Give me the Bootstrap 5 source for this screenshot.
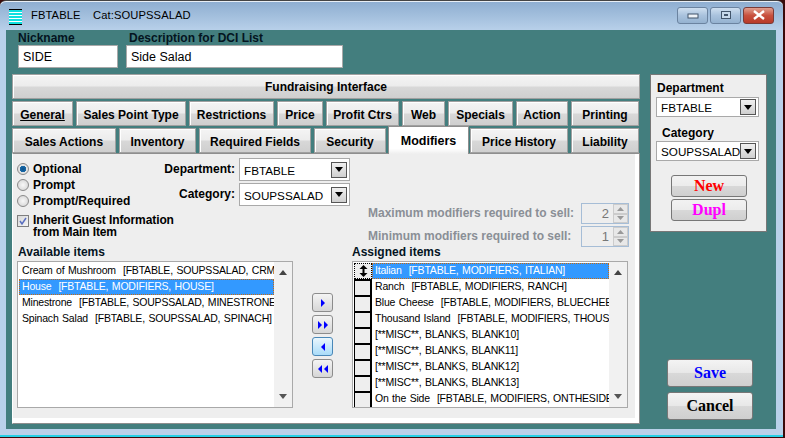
<!DOCTYPE html>
<html lang="en">
<head>
<meta charset="utf-8">
<title>FBTABLE</title>
<link href="https://cdn.jsdelivr.net/npm/bootstrap@5.3.0/dist/css/bootstrap.min.css" rel="stylesheet">
<style>
html,body{margin:0;width:785px;height:438px;overflow:hidden;background:#3a0a0a;}
body{font-family:"Liberation Sans",Arial,sans-serif;font-size:12px;color:#000;line-height:13px;}
.win{width:783px;height:437px;background:linear-gradient(180deg,#8dadd0 0,#b9d1ea 30px,#b9d1ea 100%);border-top:1px solid #444;border-bottom:2px solid #25d0e6;box-shadow:inset 0 1px 0 #e8eef5;border-radius:6px 6px 0 0;}
.ttl{height:29px;padding-left:9px;font-size:11.2px;letter-spacing:.1px;}
.ttl-ico{width:13px;height:16px;margin-top:2px;background:repeating-linear-gradient(180deg,#10e0e0 0,#10e0e0 2px,#fff 2px,#fff 3px);border-top:1px solid #000;border-bottom:1px solid #000;}
.ttl-a{margin-left:9px;width:62px;}
.wbtn{width:31px;height:17px;border:1px solid #6b83a0;border-radius:3px;background:linear-gradient(180deg,#cfdff0,#a9c2dd 50%,#95b2d0);margin-left:2px;}
.wbtn.cl{background:linear-gradient(180deg,#e0a090,#c8503e 50%,#b83a2a);border-color:#7a3b38;}
.wctl{margin-left:auto;margin-right:9px;margin-top:-1px;}
.client{width:770px;height:399px;margin-left:6px;background:#437e7e;}
.lcol{width:628px;margin-left:6px;}
.rcol{width:118px;margin-left:10px;}
.flds{padding-left:6px;}
.fld-l{font-weight:700;height:13px;margin-top:2px;color:#04141f;}
.fld-d{padding-left:3px;}
.tbx{height:23px;background:#fff;border:1px solid #a9a9a9;padding:1px 4px 0;line-height:21px;font-size:12.5px;}
.raised{background:linear-gradient(180deg,#f4f4f4 0,#ececec 48%,#d8d8d8 52%,#cfcfcf 100%);border:1px solid #a0a0a0;border-radius:0;padding:3px 0 0;color:#000;font-weight:700;font-size:12px;line-height:20px;text-align:center;height:25px;box-shadow:inset 1px 1px 0 #fff;}
.raised:hover{color:#000;}
.fund{width:628px;margin-top:6px;display:block;padding-top:2px;line-height:21px;}
.tabrow{margin-top:2px;height:25px;gap:3px;}
.tabon{height:28px;margin-top:-2px;margin-left:-1px;margin-right:-2px;padding:0;background:linear-gradient(180deg,#fff 0,#fff 80%,#eee 100%);border:1px solid #8e8e8e;border-bottom:0;box-shadow:none;font-size:12.5px;line-height:24px;position:relative;z-index:2;}
.tabu{text-decoration:underline;}
.pnl{width:628px;height:271px;background:#eee;border-top:1px solid #8e8e8e;border-left:1px solid #fff;border-right:1px solid #8e8e8e;border-bottom:1px solid #8e8e8e;box-shadow:inset -4px -5px 0 #fff;padding:4px 0 0 4px;font-weight:700;}
.upper{height:87px;}
.c1{width:147px;padding-top:3px;}
.radrow{height:16px;}
.rad{width:12px;height:12px;border-radius:50%;border:1px solid #8a8a8a;background:radial-gradient(circle,#f8f8f8,#d0d0d0);margin-right:4px;}
.rad.on{background:radial-gradient(circle,#0a4f8a 0,#1a6aa8 44%,#e4e4e4 50%,#ddd);}
.chk{width:12px;height:12px;border:1px solid #7f7f7f;background:linear-gradient(135deg,#d8d8d8,#f6f6f6);margin-right:4px;margin-top:1px;flex:none;}
.chk svg{display:block;}
.chkrow{margin-top:5px;line-height:12px;white-space:nowrap;letter-spacing:-.1px;}
.c2{width:186px;}
.sel-l{width:71px;text-align:right;margin-right:4px;}
.sel{background:#fff;border:1px solid #a9a9a9;font-weight:400;font-size:11.7px;padding:0 2px 0 4px;}
.sel-a{height:23px;width:111px;}
.sel-a .flex-grow-1{padding-top:1px;}
.sel-g{margin-top:2px;}
.sel-b{height:20px;width:103px;}
.sel .flex-grow-1{overflow:hidden;white-space:nowrap;}
.ddb{width:16px;height:16px;border:1px solid #555;background:linear-gradient(180deg,#f0f0f0,#cfcfcf);flex:none;}
.c3{margin-left:18px;padding-top:45px;color:#8a8f96;}
.spl{width:213px;}
.spin{width:48px;height:21px;background:#eee;border:1px solid #a6bdd6;font-weight:400;font-size:13px;color:#777;}
.spin .v{padding-right:4px;text-align:right;}
.spb{width:15px;}
.spb i{flex:1;background:#e8e8e8;border:1px solid #ccc;}
.gap-sp{margin-top:2px;}
.lst-w{width:276px;}
.lst-l{height:12px;margin-bottom:4px;color:#04141f;padding:1px 0 0 1px;}
.lst-n{padding-left:0;}
.lst{width:276px;height:147px;background:#fff;border:1px solid #a9a9a9;font-weight:400;font-size:10.5px;line-height:15px;letter-spacing:-.2px;word-spacing:.8px;}
.lst-r{flex:1;min-width:0;padding:1px 0 0 1px;overflow:hidden;}
.itm{height:16px;padding-left:3px;white-space:nowrap;overflow:hidden;color:#000;}
.itm.hi{background:#3399ff;color:#fff;outline:1px dotted #c86a10;outline-offset:-1px;}
.sb{width:18px;background:#f1f1f1;flex:none;}
.mv{width:21px;height:19px;margin-bottom:3px;border:1px solid #8c8c8c;border-radius:3px;background:linear-gradient(180deg,#f4f4f4,#d6d6d6);}
.mv.on{background:linear-gradient(180deg,#eaf6fd,#a9dcf9);border-color:#4a88b8;}
.mvc{width:59px;padding:48px 19px 0;}
.hdl{width:18px;height:16px;background:#eee;border:2px solid #000;border-width:2px 2px 0 1px;flex:none;}
.hdl.first{border:1px dotted #000;}
.hrow{height:16px;}
.hrow .itm{flex:1;min-width:0;}
.side{width:117px;height:158px;margin-top:44px;background:#eee;border:1px solid #777;padding:7px 0 0 5px;font-weight:700;}
.side-d{padding-left:1px;}
.side-c{margin:10px 0 1px 6px;}
.side-s{margin-top:2px;}
.act{display:block;width:76px;height:22px;margin:0 0 2px 15px;padding:0;line-height:20px;font-family:"Liberation Serif","Times New Roman",serif;font-weight:700;font-size:16px;border:1px solid #777;border-radius:3px;background:linear-gradient(180deg,#f2f2f2,#ececec 48%,#d8d8d8 52%,#cfcfcf);}
.act-red{color:#f00;margin-top:14px;}
.act-red:hover{color:#f00;}
.act-mag{color:#f0f;}
.act-mag:hover{color:#f0f;}
.big{display:block;width:86px;height:28px;padding:0;margin:0 0 5px 17px;font-family:"Liberation Serif","Times New Roman",serif;font-weight:700;font-size:16px;line-height:26px;border:1px solid #777;border-radius:3px;background:linear-gradient(180deg,#f4f4f4,#e8e8e8 48%,#d8d8d8 52%,#cfcfcf);color:#000;}
.big-b{color:#00f;}
.big-b:hover{color:#00f;}
.big-wrap{margin-top:auto;padding-bottom:4px;}
</style>
</head>
<body>
<div class="win">
  <div class="ttl d-flex align-items-center">
    <div class="ttl-ico"></div>
    <div class="ttl-a">FBTABLE</div>
    <div>Cat:SOUPSSALAD</div>
    <div class="wctl d-flex">
      <div class="wbtn d-flex align-items-center justify-content-center"><svg width="12" height="8"><rect x="1" y="3" width="10" height="4" fill="#eef3f8" stroke="#42556b"/></svg></div>
      <div class="wbtn d-flex align-items-center justify-content-center"><svg width="12" height="10"><rect x="1.5" y="1.5" width="9" height="7" fill="#c6d8ea" stroke="#42556b"/><rect x="4" y="4" width="4" height="2" fill="#42556b"/></svg></div>
      <div class="wbtn cl d-flex align-items-center justify-content-center"><svg width="14" height="10"><path d="M2 1l10 8M12 1l-10 8" stroke="#fff" stroke-width="2.4"/></svg></div>
    </div>
  </div>
  <div class="client d-flex">
    <div class="lcol">
      <div class="flds d-flex gap-2">
        <div style="width:100px"><div class="fld-l">Nickname</div><div class="tbx">SIDE</div></div>
        <div style="width:217px"><div class="fld-l fld-d">Description for DCI List</div><div class="tbx">Side Salad</div></div>
      </div>
      <button class="btn raised fund">Fundraising Interface</button>
      <div class="tabrow d-flex">
        <button class="btn raised tabu" style="width:61px">General</button>
        <button class="btn raised" style="width:110px">Sales Point Type</button>
        <button class="btn raised" style="width:85px">Restrictions</button>
        <button class="btn raised" style="width:46px">Price</button>
        <button class="btn raised" style="width:73px">Profit Ctrs</button>
        <button class="btn raised" style="width:43px">Web</button>
        <button class="btn raised" style="width:65px">Specials</button>
        <button class="btn raised" style="width:52px">Action</button>
        <button class="btn raised" style="width:68px">Printing</button>
      </div>
      <div class="tabrow d-flex">
        <button class="btn raised" style="width:104px">Sales Actions</button>
        <button class="btn raised" style="width:77px">Inventory</button>
        <button class="btn raised" style="width:112px">Required Fields</button>
        <button class="btn raised" style="width:72px">Security</button>
        <button class="btn raised tabon" style="width:81px">Modifiers</button>
        <button class="btn raised" style="width:98px">Price History</button>
        <button class="btn raised" style="width:68px">Liability</button>
      </div>
      <div class="pnl">
        <div class="upper d-flex">
          <div class="c1">
            <div class="radrow d-flex align-items-center"><span class="rad on"></span>Optional</div>
            <div class="radrow d-flex align-items-center"><span class="rad"></span>Prompt</div>
            <div class="radrow d-flex align-items-center"><span class="rad"></span>Prompt/Required</div>
            <div class="chkrow d-flex"><span class="chk"><svg width="10" height="10"><path d="M2 5l2 3 4-6" fill="none" stroke="#5a6fc0" stroke-width="1.5"/></svg></span><span>Inherit Guest Information<br>from Main Item</span></div>
          </div>
          <div class="c2">
            <div class="d-flex align-items-center"><div class="sel-l">Department:</div>
              <div class="sel sel-a d-flex align-items-center"><div class="flex-grow-1">FBTABLE</div><div class="ddb d-flex align-items-center justify-content-center"><svg width="8" height="5"><path d="M0 0h8L4 5z" fill="#000"/></svg></div></div></div>
            <div class="sel-g d-flex align-items-center"><div class="sel-l">Category:</div>
              <div class="sel sel-a d-flex align-items-center"><div class="flex-grow-1">SOUPSSALAD</div><div class="ddb d-flex align-items-center justify-content-center"><svg width="8" height="5"><path d="M0 0h8L4 5z" fill="#000"/></svg></div></div></div>
          </div>
          <div class="c3">
            <div class="d-flex align-items-center"><div class="spl">Maximum modifiers required to sell:</div>
              <div class="spin d-flex"><div class="v flex-grow-1 align-self-center">2</div><div class="spb d-flex flex-column"><i class="d-flex align-items-center justify-content-center"><svg width="7" height="4"><path d="M0 4h7L3.500 0z" fill="#999"/></svg></i><i class="d-flex align-items-center justify-content-center"><svg width="7" height="4"><path d="M0 0h7L3.500 4z" fill="#999"/></svg></i></div></div></div>
            <div class="d-flex align-items-center gap-sp"><div class="spl">Minimum modifiers required to sell:</div>
              <div class="spin d-flex"><div class="v flex-grow-1 align-self-center">1</div><div class="spb d-flex flex-column"><i class="d-flex align-items-center justify-content-center"><svg width="7" height="4"><path d="M0 4h7L3.500 0z" fill="#999"/></svg></i><i class="d-flex align-items-center justify-content-center"><svg width="7" height="4"><path d="M0 0h7L3.500 4z" fill="#999"/></svg></i></div></div></div>
          </div>
        </div>
        <div class="d-flex">
          <div class="lst-w">
            <div class="lst-l">Available items</div>
            <div class="lst d-flex">
              <div class="lst-r">
                <div class="itm">Cream of Mushroom&nbsp; [FBTABLE, SOUPSSALAD, CRM]</div>
                <div class="itm hi">House&nbsp; [FBTABLE, MODIFIERS, HOUSE]</div>
                <div class="itm">Minestrone&nbsp; [FBTABLE, SOUPSSALAD, MINESTRONE]</div>
                <div class="itm">Spinach Salad&nbsp; [FBTABLE, SOUPSSALAD, SPINACH]</div>
              </div>
              <div class="sb d-flex flex-column justify-content-between align-items-center py-1">
                <svg width="8" height="5" class="mt-1"><path d="M0 5h8L4 0z" fill="#444"/></svg>
                <svg width="8" height="5" class="mb-1"><path d="M0 0h8L4 5z" fill="#555"/></svg>
              </div>
            </div>
          </div>
          <div class="mvc">
            <div class="mv d-flex align-items-center justify-content-center"><svg width="6" height="8"><path d="M1 0l4 4-4 4z" fill="#00f"/></svg></div>
            <div class="mv d-flex align-items-center justify-content-center"><svg width="12" height="8"><path d="M1 0l4 4-4 4zM7 0l4 4-4 4z" fill="#00f"/></svg></div>
            <div class="mv on d-flex align-items-center justify-content-center"><svg width="6" height="8"><path d="M5 0L1 4l4 4z" fill="#00f"/></svg></div>
            <div class="mv d-flex align-items-center justify-content-center"><svg width="12" height="8"><path d="M5 0L1 4l4 4zM11 0L7 4l4 4z" fill="#00f"/></svg></div>
          </div>
          <div class="lst-w">
            <div class="lst-l lst-n">Assigned items</div>
            <div class="lst d-flex">
              <div class="lst-r">
                <div class="hrow d-flex"><div class="hdl first d-flex align-items-center justify-content-center"><svg width="9" height="12"><path d="M4.500 0L8.500 4H5.500v4H8.500l-4 4L.5 8H3.500V4H.5z" fill="#000"/></svg></div><div class="itm hi">Italian&nbsp; [FBTABLE, MODIFIERS, ITALIAN]</div></div>
                <div class="hrow d-flex"><div class="hdl"></div><div class="itm">Ranch&nbsp; [FBTABLE, MODIFIERS, RANCH]</div></div>
                <div class="hrow d-flex"><div class="hdl"></div><div class="itm">Blue Cheese&nbsp; [FBTABLE, MODIFIERS, BLUECHEESE]</div></div>
                <div class="hrow d-flex"><div class="hdl"></div><div class="itm">Thousand Island&nbsp; [FBTABLE, MODIFIERS, THOUSAND]</div></div>
                <div class="hrow d-flex"><div class="hdl"></div><div class="itm">[**MISC**, BLANKS, BLANK10]</div></div>
                <div class="hrow d-flex"><div class="hdl"></div><div class="itm">[**MISC**, BLANKS, BLANK11]</div></div>
                <div class="hrow d-flex"><div class="hdl"></div><div class="itm">[**MISC**, BLANKS, BLANK12]</div></div>
                <div class="hrow d-flex"><div class="hdl"></div><div class="itm">[**MISC**, BLANKS, BLANK13]</div></div>
                <div class="hrow d-flex"><div class="hdl"></div><div class="itm">On the Side&nbsp; [FBTABLE, MODIFIERS, ONTHESIDE]</div></div>
              </div>
              <div class="sb d-flex flex-column justify-content-between align-items-center py-1">
                <svg width="8" height="5" class="mt-1"><path d="M0 5h8L4 0z" fill="#444"/></svg>
                <svg width="8" height="5" class="mb-1"><path d="M0 0h8L4 5z" fill="#555"/></svg>
              </div>
            </div>
          </div>
        </div>
      </div>
    </div>
    <div class="rcol d-flex flex-column">
      <div class="side">
        <div class="side-d">Department</div>
        <div class="sel sel-b side-s d-flex align-items-center"><div class="flex-grow-1">FBTABLE</div><div class="ddb d-flex align-items-center justify-content-center"><svg width="8" height="5"><path d="M0 0h8L4 5z" fill="#000"/></svg></div></div>
        <div class="side-c">Category</div>
        <div class="sel sel-b d-flex align-items-center"><div class="flex-grow-1">SOUPSSALAD</div><div class="ddb d-flex align-items-center justify-content-center"><svg width="8" height="5"><path d="M0 0h8L4 5z" fill="#000"/></svg></div></div>
        <button class="btn act act-red">New</button>
        <button class="btn act act-mag">Dupl</button>
      </div>
      <div class="big-wrap">
        <button class="btn big big-b">Save</button>
        <button class="btn big">Cancel</button>
      </div>
    </div>
  </div>
</div>
<script src="https://cdn.jsdelivr.net/npm/bootstrap@5.3.0/dist/js/bootstrap.bundle.min.js"></script>
</body>
</html>
